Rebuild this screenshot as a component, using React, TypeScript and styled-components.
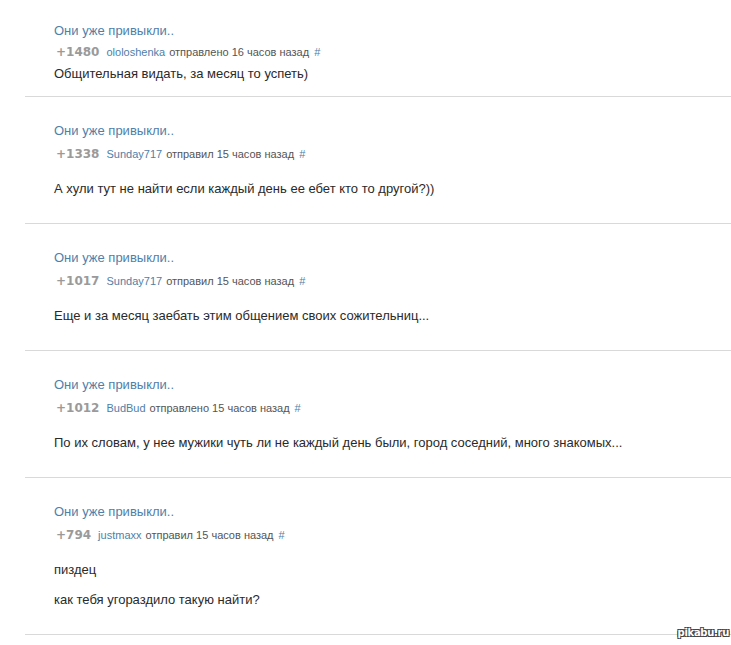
import React from "react";
import styled, { createGlobalStyle } from "styled-components";

const Global = createGlobalStyle`
  html, body { margin: 0; padding: 0; background: #fff; }
  body { font-family: "Liberation Sans", Arial, sans-serif; }
`;

const Page = styled.div`
  position: relative;
  width: 731px;
  height: 645px;
  overflow: hidden;
  padding: 23px 0 0 25px;
  box-sizing: border-box;
`;

const Comment = styled.section<{ $compact?: boolean }>`
  border-bottom: 1px solid #d9d9d9;
  padding: ${(p) => (p.$compact ? "0 0 14px 29px" : "26px 0 26px 29px")};
`;

const Title = styled.a`
  display: block;
  font-size: 13px;
  line-height: 16px;
  color: #4f80a9;
  text-decoration: none;
`;

const Meta = styled.div<{ $compact?: boolean }>`
  display: flex;
  align-items: baseline;
  gap: 4px;
  margin-top: ${(p) => (p.$compact ? "3px" : "5px")};
  height: 20px;
  line-height: 20px;
  padding-left: 2px;
`;

const Rating = styled.span`
  font-family: "DejaVu Sans", Verdana, sans-serif;
  font-weight: bold;
  font-size: 12px;
  color: #9a9a9a;
  margin-right: 3px;
`;

const User = styled.a`
  font-size: 11px;
  color: #4f80a9;
  text-decoration: none;
`;

const When = styled.span`
  font-size: 11px;
  color: #555;
`;

const Hash = styled.a`
  font-size: 11px;
  color: #4f80a9;
  text-decoration: none;
  margin-left: 1px;
`;

const Body = styled.div<{ $compact?: boolean }>`
  display: flex;
  flex-direction: column;
  gap: 13px;
  margin-top: ${(p) => (p.$compact ? "3px" : "16px")};
  font-size: 13px;
  line-height: 17px;
  color: #2a2a2a;
`;

const Watermark = styled.div`
  position: absolute;
  right: 2px;
  top: 627px;
  font-family: "DejaVu Sans", sans-serif;
  font-weight: bold;
  font-size: 10px;
  letter-spacing: -0.3px;
  color: #fff;
  text-shadow: -1px -1px 0 #444, 1px -1px 0 #444, -1px 1px 0 #444, 1px 1px 0 #444;
`;

type Item = {
  rating: string;
  user: string;
  verb: string;
  hours: string;
  text: string[];
  compact?: boolean;
};

const items: Item[] = [
  { rating: "+1480", user: "ololoshenka", verb: "отправлено", hours: "16", text: ["Общительная видать, за месяц то успеть)"], compact: true },
  { rating: "+1338", user: "Sunday717", verb: "отправил", hours: "15", text: ["А хули тут не найти если каждый день ее ебет кто то другой?))"] },
  { rating: "+1017", user: "Sunday717", verb: "отправил", hours: "15", text: ["Еще и за месяц заебать этим общением своих сожительниц..."] },
  { rating: "+1012", user: "BudBud", verb: "отправлено", hours: "15", text: ["По их словам, у нее мужики чуть ли не каждый день были, город соседний, много знакомых..."] },
  { rating: "+794", user: "justmaxx", verb: "отправил", hours: "15", text: ["пиздец", "как тебя угораздило такую найти?"] },
];

export default function App() {
  return (
    <>
      <Global />
      <Page>
        {items.map((it, i) => (
          <Comment key={i} $compact={it.compact}>
            <Title>Они уже привыкли..</Title>
            <Meta $compact={it.compact}>
              <Rating>{it.rating}</Rating>
              <User>{it.user}</User>
              <When>{it.verb} {it.hours} часов назад</When>
              <Hash>#</Hash>
            </Meta>
            <Body $compact={it.compact}>
              {it.text.map((t, j) => (
                <div key={j}>{t}</div>
              ))}
            </Body>
          </Comment>
        ))}
        <Watermark>pikabu.ru</Watermark>
      </Page>
    </>
  );
}
